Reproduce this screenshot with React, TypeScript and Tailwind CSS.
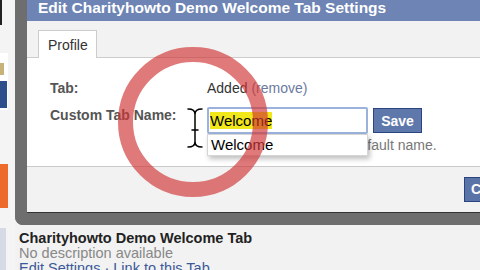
export default function App() {
  return (
    <div className="relative flex h-[270px] w-[480px] overflow-hidden bg-[#f2f2f2] font-['Liberation_Sans',Arial,sans-serif]">
      <LeftStrip />

      <div className="flex w-[540px] shrink-0 flex-col">
        {/* dialog */}
        <div className="flex h-[225px] shrink-0 flex-col rounded-bl-[8px] border-b-[12px] border-l-[12px] border-[#6e6e6e]">
          <div className="h-[21px] bg-[#6d84b4] pl-[11px] text-[15.5px] leading-[15px] font-bold text-white">
            Edit Charityhowto Demo Welcome Tab Settings
          </div>

          <div className="flex h-[37px] items-end border-b border-[#cccccc] bg-[#f2f2f2] pl-[11px]">
            <div className="-mb-px h-[28px] w-[59px] border border-b-0 border-[#cccccc] bg-white pt-[6px] pl-[9px] text-[14px] leading-[16px] text-[#333]">
              Profile
            </div>
          </div>

          <div className="h-[109px] border-b border-[#c9c9c9] bg-white pt-[22px] pl-[23px]">
            <div className="grid grid-cols-[157px_auto] items-start text-[14px] leading-[16px]">
              <div className="font-bold text-[#555]">Tab:</div>
              <div className="text-[#333]">
                Added <span className="text-[#6b7aa0]">(remove)</span>
              </div>

              <div className="mt-[11px] font-bold text-[#555]">Custom Tab Name:</div>
              <div className="mt-[11px] flex items-start">
                <div className="relative">
                  <div className="flex h-[27px] w-[161px] items-center rounded-[2px] border-2 border-[#9bb3dc] bg-white pl-[1px]">
                    <span className="bg-[#f0e81a] text-[15px] leading-[17px] text-black">Welcome</span>
                  </div>
                  <IBeam />
                  <div className="absolute top-full left-0 z-10 flex h-[22px] w-[161px] items-center border border-[#d6d6d6] bg-white pl-[3px] text-[15px] text-black shadow-[2px_3px_5px_rgba(0,0,0,0.25)]">
                    Welcome
                  </div>
                </div>
                <div className="mt-[1px] ml-[5px] flex h-[25px] w-[49px] items-center justify-center border border-[#29447e] bg-[#5f78ab] text-[14px] font-bold text-white">
                  Save
                </div>
              </div>

              <div />
              <div className="mt-[3px] text-[#777]">Leave blank to use the default name.</div>
            </div>
          </div>

          <div className="flex flex-1 items-start border-b border-[#333] bg-[#f2f2f2] pt-[10px] pl-[437px]">
            <div className="flex h-[25px] w-[52px] items-center justify-center border border-[#29447e] bg-[#5b74a8] text-[14px] font-bold text-white">
              Close
            </div>
          </div>
        </div>

        {/* tab list below */}
        <div className="pt-[6px] pl-[4px] text-[14.5px] leading-[15px]">
          <div className="font-bold text-[#222]">Charityhowto Demo Welcome Tab</div>
          <div className="text-[#888]">No description available</div>
          <div className="text-[#3b5998]">Edit Settings · Link to this Tab</div>
        </div>
      </div>

      {/* red annotation circle */}
      <div className="pointer-events-none absolute top-[47px] left-[118px] z-20 h-[150px] w-[150px] rounded-full border-[15px] border-[rgba(208,52,52,0.66)]" />
    </div>
  );
}

function LeftStrip() {
  return (
    <div className="flex h-full w-[15px] shrink-0 flex-col bg-[#f4f4f4]">
      <div className="h-[25px] w-[2px] bg-[#222]" />
      <div className="mt-[28px] flex h-[57px] w-[8px] flex-col bg-white">
        <div className="mt-[10px] h-[12px] w-[4px] bg-[#c9b27a]" />
        <div className="mt-[6px] h-[27px] w-[7px] bg-[#2c4f8c]" />
      </div>
      <div className="mt-[54px] h-[44px] w-[8px] bg-[#ee6a2a]" />
      <div className="mt-[20px] h-[42px] w-[6px] bg-[#d6dae4]" />
    </div>
  );
}

function IBeam() {
  return (
    <svg
      className="absolute top-[1px] left-[-21px]"
      width="18"
      height="40"
      viewBox="0 0 18 40"
      fill="none"
    >
      <g stroke="#fff" strokeWidth="3.5" strokeLinecap="round">
        <path d="M2 1 Q9 1 9 6 Q9 1 16 1" />
        <path d="M9 6 V34" />
        <path d="M2 39 Q9 39 9 34 Q9 39 16 39" />
        <path d="M6 22 H12" />
      </g>
      <g stroke="#000" strokeWidth="1.5" strokeLinecap="round">
        <path d="M2 1 Q9 1 9 6 Q9 1 16 1" />
        <path d="M9 6 V34" />
        <path d="M2 39 Q9 39 9 34 Q9 39 16 39" />
        <path d="M6 22 H12" />
      </g>
    </svg>
  );
}
